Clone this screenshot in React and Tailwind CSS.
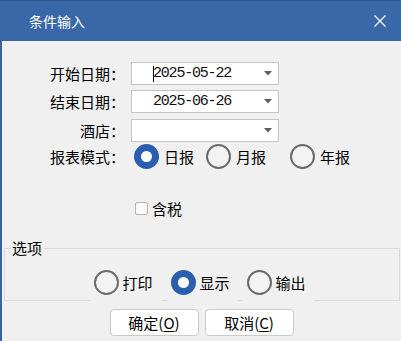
import React, { useState } from 'react';

const cjk = { fontFamily: '"Noto Sans CJK SC", "Noto Sans", sans-serif' };
const mono = { fontFamily: '"Liberation Mono", "DejaVu Sans Mono", monospace' };

const Caret = () => (
    <svg width="8" height="5" viewBox="0 0 8 5" className="shrink-0">
        <path d="M0 0H8L4 4.5Z" fill="#5f5f5f" />
    </svg>
);

const DateBox = ({ value, focused }) => (
    <div className="ml-[5px] w-[148px] h-full bg-white border border-[#c4c4c4] flex items-center pl-[21px] pr-[6px]">
        {focused && <span className="w-px h-[16px] bg-black -mr-px" />}
        <span className="flex-1 text-[15px] tracking-[-1.2px] text-[#111] leading-none" style={mono}>{value}</span>
        <Caret />
    </div>
);

const Radio = ({ checked }) => (
    checked ? (
        <span className="w-[25px] h-[25px] rounded-full bg-[#2b5fae] flex items-center justify-center shrink-0">
            <span className="w-[11px] h-[11px] rounded-full bg-white" />
        </span>
    ) : (
        <span className="w-[25px] h-[25px] rounded-full border-2 border-[#6a6a6a] bg-[#f3f3f3] shrink-0" />
    )
);

const Row = ({ label, children, className = '' }) => (
    <div className={`flex items-center ${className}`}>
        <div className="w-[124px] text-right text-[15px] text-black leading-none pr-[1px]">{label}</div>
        {children}
    </div>
);

export default function App() {
    const [mode, setMode] = useState('day');
    const [output, setOutput] = useState('show');

    return (
        <div className="w-[401px] h-[341px] bg-[#f0f0f0] overflow-hidden flex flex-col" style={cjk}>
            {/* title bar */}
            <div className="h-[41px] bg-[#3a67a8] border-t border-[#2f5892] flex items-center pl-[29px] pr-[15px] shrink-0">
                <span className="flex-1 text-white text-[14px] leading-none">条件输入</span>
                <svg width="12" height="12" viewBox="0 0 12 12">
                    <path d="M0.5 0.5L11.5 11.5M11.5 0.5L0.5 11.5" stroke="white" strokeWidth="1.2" />
                </svg>
            </div>

            <div className="flex-1 border-l-2 border-[#3a63a2] flex flex-col">
                <Row label="开始日期：" className="h-[23px] mt-[21px]">
                    <DateBox value="2025-05-22" focused />
                </Row>
                <Row label="结束日期：" className="h-[23px] mt-[5px]">
                    <DateBox value="2025-06-26" />
                </Row>
                <Row label="酒店：" className="h-[23px] mt-[6px]">
                    <div className="ml-[5px] w-[148px] h-full bg-white border border-[#c4c4c4] flex items-center justify-end pr-[6px]">
                        <Caret />
                    </div>
                </Row>
                <Row label="报表模式：" className="h-[25px] mt-[2px]">
                    <div className="flex items-center ml-[8px] text-[15px] text-black leading-none">
                        <button className="flex items-center gap-[5px]" onClick={() => setMode('day')}>
                            <Radio checked={mode === 'day'} />日报
                        </button>
                        <button className="flex items-center gap-[5px] ml-[12px]" onClick={() => setMode('month')}>
                            <Radio checked={mode === 'month'} />月报
                        </button>
                        <button className="flex items-center gap-[5px] ml-[24px]" onClick={() => setMode('year')}>
                            <Radio checked={mode === 'year'} />年报
                        </button>
                    </div>
                </Row>

                <div className="h-[20px] mt-[29px] flex items-center pl-[133px] gap-[4px]">
                    <span className="w-[13px] h-[13px] rounded-[2px] border border-[#b4b4b4] bg-[#fafafa]" />
                    <span className="text-[15px] text-black leading-none">含税</span>
                </div>

                <fieldset className="mt-[20px] ml-[2px] w-[396px] border-x border-t border-b-0 border-[#dadada]">
                    <legend className="ml-[5px] px-[2px] text-[15px] leading-[20px] text-black">选项</legend>
                    <div className="flex justify-center gap-[5px] pt-[11px] pb-[4px] text-[15px] text-black leading-none">
                        <button className="w-[71px] h-[27px] flex items-center gap-[4px] pl-[3px]" onClick={() => setOutput('print')}>
                            <Radio checked={output === 'print'} />打印
                        </button>
                        <button className="w-[71px] h-[27px] flex items-center gap-[4px] pl-[4px]" onClick={() => setOutput('show')}>
                            <Radio checked={output === 'show'} />显示
                        </button>
                        <button className="w-[71px] h-[27px] flex items-center gap-[4px] pl-[4px]" onClick={() => setOutput('export')}>
                            <Radio checked={output === 'export'} />输出
                        </button>
                    </div>
                    {/* bottom edge, broken where the radio buttons sit */}
                    <div className="flex h-px">
                        <div className="flex-1 bg-[#dadada]" />
                        <div className="w-[71px]" />
                        <div className="w-[5px] bg-[#dadada]" />
                        <div className="w-[71px]" />
                        <div className="w-[5px] bg-[#dadada]" />
                        <div className="w-[71px]" />
                        <div className="flex-1 bg-[#dadada]" />
                    </div>
                </fieldset>

                <div className="flex justify-center gap-[6px] mt-[8px]">
                    <button className="w-[89px] h-[27px] bg-white border border-[#cacaca] rounded-[4px] text-[15px] leading-none text-black">
                        确定(<span className="underline underline-offset-2">O</span>)
                    </button>
                    <button className="w-[89px] h-[27px] bg-white border border-[#cacaca] rounded-[4px] text-[15px] leading-none text-black">
                        取消(<span className="underline underline-offset-2">C</span>)
                    </button>
                </div>
            </div>
        </div>
    );
}
